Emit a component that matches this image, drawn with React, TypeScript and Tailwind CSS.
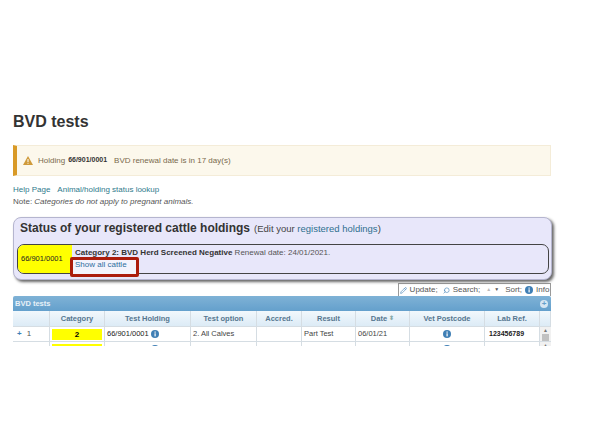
import { Pencil, Search } from "lucide-react";

const font = { fontFamily: '"Liberation Sans", Arial, sans-serif' };

const InfoDot = ({ size = 8 }: { size?: number }) => (
  <svg width={size} height={size} viewBox="0 0 16 16" className="inline-block shrink-0">
    <circle cx="8" cy="8" r="8" fill="#3f7fb5" />
    <rect x="7" y="3" width="2.4" height="2.4" fill="#fff" />
    <rect x="7" y="6.6" width="2.4" height="6.2" fill="#fff" />
  </svg>
);

const columns = [
  { label: "", w: "w-[37px]" },
  { label: "Category", w: "w-[55px]" },
  { label: "Test Holding", w: "w-[86px]" },
  { label: "Test option", w: "w-[66px]" },
  { label: "Accred.", w: "w-[45px]" },
  { label: "Result", w: "w-[54px]" },
  { label: "Date", w: "w-[54px]" },
  { label: "Vet Postcode", w: "w-[75px]" },
  { label: "Lab Ref.", w: "w-[55px]" },
  { label: "", w: "w-[11px]" },
];

const cell = "border-r border-[#d5dde3] h-full flex items-center shrink-0 px-[2px] overflow-hidden whitespace-nowrap";

const Row = ({ num, sign, cat, holding, option, result, date, lab }: {
  num: string; sign: string; cat: string; holding: string; option: string; result: string; date: string; lab: string;
}) => (
  <div className="flex h-[15px] border-b border-[#d5dde3] text-[7.5px] text-[#444] shrink-0">
    <div className={`${cell} w-[37px] pl-[4px] gap-[5px] text-[8px] text-[#555]`}>
      <span className="text-[#3f7fb5] font-bold">{sign}</span>
      <span>{num}</span>
    </div>
    <div className={`${cell} w-[55px]`}>
      <div className="w-full h-[11px] bg-[#ffff00] text-center text-black font-bold text-[8px] leading-[11px]">{cat}</div>
    </div>
    <div className={`${cell} w-[86px] gap-[2px] text-[#222]`}>{holding} <InfoDot /></div>
    <div className={`${cell} w-[66px]`}>{option}</div>
    <div className={`${cell} w-[45px]`}></div>
    <div className={`${cell} w-[54px]`}>{result}</div>
    <div className={`${cell} w-[54px]`}>{date}</div>
    <div className={`${cell} w-[75px] justify-center`}><InfoDot /></div>
    <div className={`${cell} w-[55px] pl-[4px] text-[#222] font-bold text-[7px]`}>{lab}</div>
    <div className="w-[11px] shrink-0 bg-[#f1f1f1] flex flex-col items-center">
      <span className="text-[5px] leading-[7px] text-[#777]">▲</span>
      <div className="w-[7px] h-[12px] bg-[#c1c1c1]"></div>
    </div>
  </div>
);

export default function App() {
  return (
    <div style={font} className="w-[592px] h-[444px] bg-white overflow-hidden px-[13px] pt-[112px] relative">
      <h1 className="text-[16px] leading-[20px] font-bold text-[#333]">BVD tests</h1>

      <div className="w-[538px] h-[31px] mt-[13px] flex items-center bg-[#fcf8ec] border border-[#f4ecd8] border-l-[4px] border-l-[#d99a27] pl-[6px] text-[8px] text-[#7a6a4c]">
        <svg width="10" height="9" viewBox="0 0 20 18" className="mr-[5px]">
          <path d="M10 0 L20 18 L0 18 Z" fill="#cf9a3a" />
          <rect x="9" y="6" width="2" height="6" fill="#fff" />
          <rect x="9" y="13.5" width="2" height="2" fill="#fff" />
        </svg>
        <span>Holding</span>
        <span className="ml-[3px] text-[7px] font-bold text-[#333]">66/901/0001</span>
        <span className="ml-[7px]">BVD renewal date is in 17 day(s)</span>
      </div>

      <div className="mt-[8px] text-[8px] leading-[12px] text-[#2f7a8c] flex gap-[7px]">
        <span>Help Page</span>
        <span>Animal/holding status lookup</span>
      </div>
      <p className="text-[8px] leading-[12px] text-[#555]">
        Note: <em>Categories do not apply to pregnant animals.</em>
      </p>

      <div className="relative w-[539px] h-[63px] mt-[9px] bg-[#e8e7fa] border border-[#b5b5cf] rounded-[8px] shadow-[2px_2px_3px_#666] pt-[1px] pl-[6px] pr-[2px]">
        <div className="h-[25px] flex items-baseline whitespace-nowrap">
          <span className="text-[12px] font-bold text-[#333]">Status of your registered cattle holdings</span>
          <span className="ml-[4px] text-[9.5px] text-[#444]">
            (Edit your <span className="text-[#2f6f8f]">registered holdings</span>)
          </span>
        </div>
        <div className="-ml-[3px] h-[30px] flex border border-[#444] rounded-[7px] overflow-hidden">
          <div className="w-[54px] bg-[#ffff00] flex items-center pl-[3px] text-[7.5px] text-[#222] shrink-0">66/901/0001</div>
          <div className="pl-[3px] pt-[2px] text-[8px] leading-[12px] text-[#555]">
            <div><span className="font-bold text-[#333]">Category 2: BVD Herd Screened Negative</span> Renewal date: 24/01/2021.</div>
            <div className="relative z-10 text-[#2f6f9f] text-[8px]">Show all cattle</div>
          </div>
        </div>
        <div className="absolute left-[56px] top-[39px] w-[69px] h-[20px] bg-[#f3f3fc] border-[3px] border-[#ab1c0c] rounded-[2px]"></div>
      </div>

      <div className="flex justify-end w-[538px] mt-[3px]">
        <div className="h-[13px] w-[153px] border border-[#999] border-b-0 flex items-center justify-center gap-[3px] text-[8px] text-[#555] whitespace-nowrap">
          <Pencil size={7} className="text-[#3f7fb5]" />
          <span>Update;</span>
          <Search size={7} className="text-[#3f7fb5] -scale-x-100 ml-[2px]" />
          <span>Search;</span>
          <span className="text-[5px] text-[#bbb] ml-[3px]">▲</span>
          <span className="text-[5px] text-[#555] mr-[3px]">▼</span>
          <span>Sort;</span>
          <InfoDot />
          <span>Info</span>
        </div>
      </div>

      <div className="w-[538px] h-[50px] overflow-hidden rounded-t-[2px] flex flex-col">
        <div className="h-[15px] shrink-0 bg-gradient-to-b from-[#7fb2d6] to-[#64a0cc] flex items-center justify-between px-[2px] text-[7.5px] font-bold text-[#e8f1f8]">
          <span>BVD tests</span>
          <span className="w-[8px] h-[8px] mr-[1px] rounded-full bg-[#d5e6f2] flex items-center justify-center text-[8px] leading-none text-[#64a0cc]">+</span>
        </div>
        <div className="flex h-[16px] shrink-0 bg-gradient-to-b from-[#f2f8fc] to-[#dcebf6] border-b border-[#d5dde3] text-[7.5px] font-bold text-[#55768f]">
          {columns.map((c, i) => (
            <div key={i} className={`${c.w} shrink-0 border-r border-[#d5dde3] flex items-center justify-center gap-[2px] whitespace-nowrap`}>
              {c.label}
              {c.label === "Date" && <span className="text-[6px] text-[#8aa]">⬍</span>}
            </div>
          ))}
        </div>
        <Row num="1" sign="+" cat="2" holding="66/901/0001" option="2. All Calves" result="Part Test" date="06/01/21" lab="123456789" />
        <Row num="2" sign="+" cat="1" holding="78/345/0001" option="2. All Calves" result="Part Test" date="06/01/21" lab="78/345/0001" />
      </div>
    </div>
  );
}
